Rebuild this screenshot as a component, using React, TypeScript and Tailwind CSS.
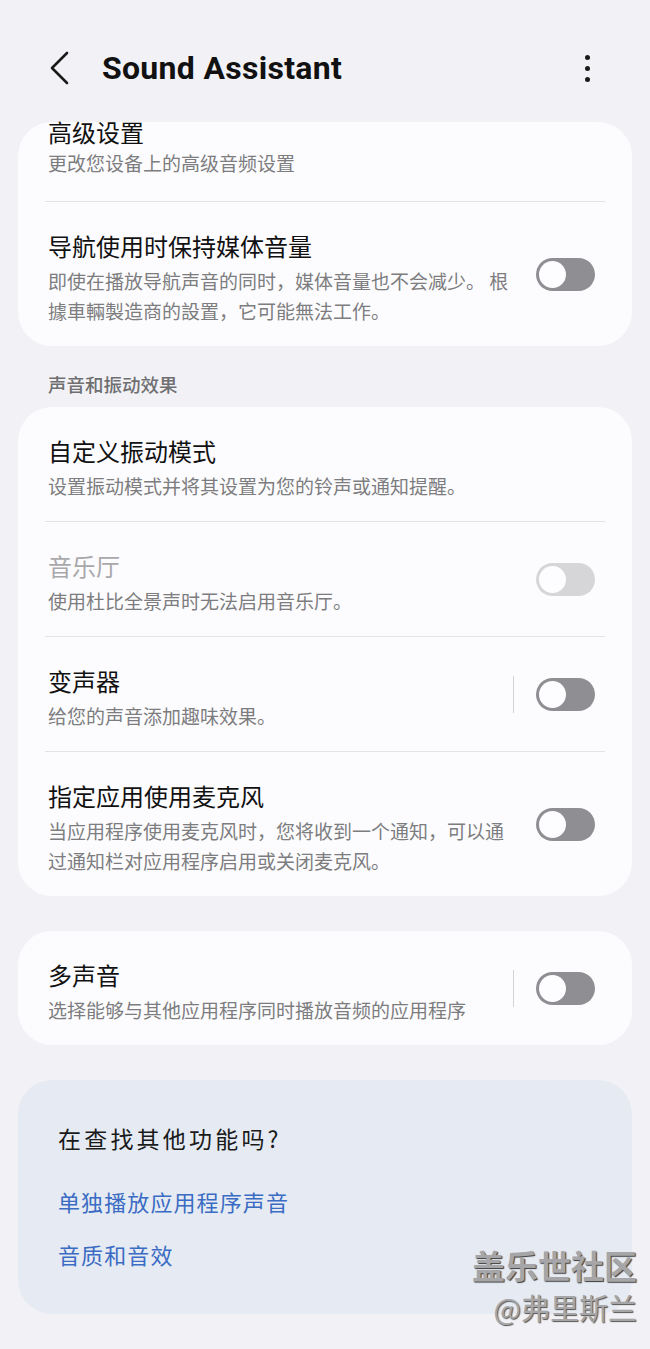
import React from "react";

const CJK = '"Noto Sans CJK SC", "Noto Sans", sans-serif';

function Toggle({ disabled = false }: { disabled?: boolean }) {
  return (
    <div
      className={`flex h-[33px] w-[59px] shrink-0 items-center rounded-full p-[3px] ${
        disabled ? "bg-[#d6d6d9]" : "bg-[#8f8f93]"
      }`}
    >
      <div className="h-[27px] w-[27px] rounded-full bg-[#fdfdff]" />
    </div>
  );
}

type RowProps = {
  title: string;
  lines: string[];
  toggle?: boolean;
  disabled?: boolean;
  bar?: boolean;
  first?: boolean;
};

function Row({ title, lines, toggle, disabled, bar, first }: RowProps) {
  return (
    <div className={`flex items-center pl-[30px] pr-[37px] ${first ? "pb-[23px]" : "pt-[29px] pb-[20px]"}`}>
      <div className="min-w-0 flex-1">
        <div
          className={`${first ? "-mt-[2px] leading-[24px]" : "leading-[30px]"} text-[24px] ${
            disabled ? "text-[#a9a9ab]" : "text-[#111111]"
          }`}
        >
          {title}
        </div>
        <div className={`${first ? "mt-[4px]" : "mt-[5px]"} text-[19px] leading-[30px] text-[#7d7d7f]`}>
          {lines.map((l, i) => (
            <div key={i} className="whitespace-nowrap">
              {l}
            </div>
          ))}
        </div>
      </div>
      {toggle && (
        <div className="-mt-[9px] flex items-center">
          {bar && <div className="mr-[22px] h-[37px] w-px bg-[#d3d3d6]" />}
          <Toggle disabled={disabled} />
        </div>
      )}
    </div>
  );
}

function Divider() {
  return <div className="mx-[27px] h-px bg-[#e3e3e7]" />;
}

export default function App() {
  return (
    <div
      className="relative min-h-[1349px] w-[650px] overflow-hidden bg-[#f2f2f6]"
      style={{ fontFamily: CJK }}
    >
      {/* Header */}
      <div className="flex h-[122px] items-start pt-[48px]">
        <div className="flex h-[40px] w-full items-center">
          <svg width="24" height="34" viewBox="0 0 24 34" className="ml-[47px]">
            <polyline
              points="20,2 5,17 20,32"
              fill="none"
              stroke="#1a1a1a"
              strokeWidth="2.6"
              strokeLinecap="round"
              strokeLinejoin="round"
            />
          </svg>
          <div
            className="ml-[31px] text-[32px] font-bold leading-[40px] tracking-[0.3px] text-[#111111]"
            style={{ fontFamily: 'Roboto, "Noto Sans", sans-serif' }}
          >
            Sound Assistant
          </div>
          <div className="ml-auto mr-[60px] flex flex-col items-center gap-[6px]">
            <div className="h-[5px] w-[5px] rounded-full bg-[#1a1a1a]" />
            <div className="h-[5px] w-[5px] rounded-full bg-[#1a1a1a]" />
            <div className="h-[5px] w-[5px] rounded-full bg-[#1a1a1a]" />
          </div>
        </div>
      </div>

      {/* Card 1 */}
      <div className="mx-[18px] rounded-[34px] bg-[#fcfcfe]">
        <Row first title="高级设置" lines={["更改您设备上的高级音频设置"]} />
        <Divider />
        <Row
          title="导航使用时保持媒体音量"
          lines={["即使在播放导航声音的同时，媒体音量也不会减少。 根", "據車輛製造商的設置，它可能無法工作。"]}
          toggle
        />
      </div>

      {/* Section header */}
      <div className="px-[48px] pt-[23px] pb-[8px] text-[18.5px] font-medium leading-[30px] text-[#6f6f72]">
        声音和振动效果
      </div>

      {/* Card 2 */}
      <div className="mx-[18px] rounded-[34px] bg-[#fcfcfe]">
        <Row title="自定义振动模式" lines={["设置振动模式并将其设置为您的铃声或通知提醒。"]} />
        <Divider />
        <Row title="音乐厅" lines={["使用杜比全景声时无法启用音乐厅。"]} toggle disabled />
        <Divider />
        <Row title="变声器" lines={["给您的声音添加趣味效果。"]} toggle bar />
        <Divider />
        <Row
          title="指定应用使用麦克风"
          lines={["当应用程序使用麦克风时，您将收到一个通知，可以通", "过通知栏对应用程序启用或关闭麦克风。"]}
          toggle
        />
      </div>

      {/* Card 3 */}
      <div className="mx-[18px] mt-[35px] rounded-[34px] bg-[#fcfcfe]">
        <Row title="多声音" lines={["选择能够与其他应用程序同时播放音频的应用程序"]} toggle bar />
      </div>

      {/* Card 4 */}
      <div className="mx-[18px] mt-[35px] rounded-[34px] bg-[#e6ebf3] px-[40px] pt-[43px] pb-[45px]">
        <div className="text-[23px] leading-[30px] tracking-[3.2px] text-[#1a1a1a]">在查找其他功能吗?</div>
        <div className="mt-[33px] text-[22px] leading-[30px] tracking-[1.1px] text-[#3b6cc3]">单独播放应用程序声音</div>
        <div className="mt-[23px] text-[22px] leading-[30px] tracking-[1.1px] text-[#3b6cc3]">音质和音效</div>
      </div>

      {/* Watermark */}
      <div className="absolute right-[13px] top-[1244px] flex flex-col items-end">
        <div className="text-[33px] font-bold leading-[42px] text-[#a6a6a8] [text-shadow:1px_1px_1px_#3a3a3a]">
          盖乐世社区
        </div>
        <div className="mt-[2px] text-[29px] leading-[38px] text-[#a6a6a8] [text-shadow:1px_1px_1px_#555555]">
          @弗里斯兰
        </div>
      </div>
    </div>
  );
}
